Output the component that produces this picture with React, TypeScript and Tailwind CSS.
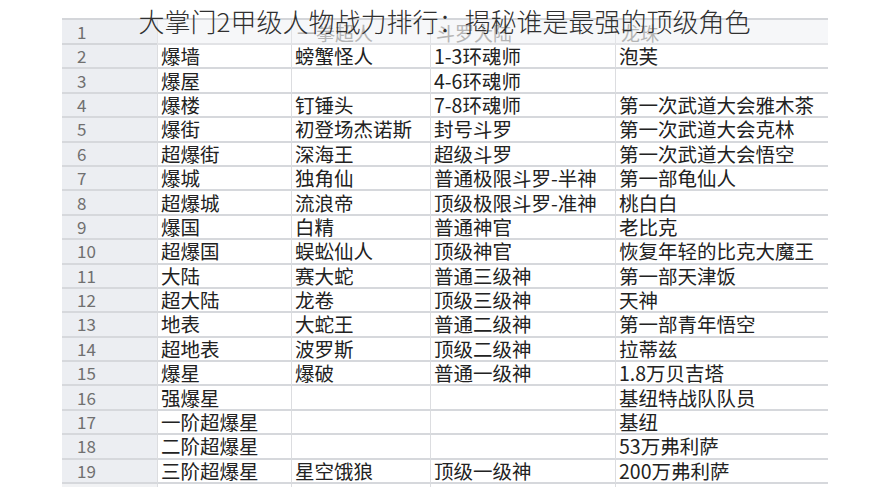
import React from "react";

const ROWS: string[][] = [
  ["爆墙", "螃蟹怪人", "1-3环魂师", "泡芙"],
  ["爆屋", "", "4-6环魂师", ""],
  ["爆楼", "钉锤头", "7-8环魂师", "第一次武道大会雅木茶"],
  ["爆街", "初登场杰诺斯", "封号斗罗", "第一次武道大会克林"],
  ["超爆街", "深海王", "超级斗罗", "第一次武道大会悟空"],
  ["爆城", "独角仙", "普通极限斗罗-半神", "第一部龟仙人"],
  ["超爆城", "流浪帝", "顶级极限斗罗-准神", "桃白白"],
  ["爆国", "白精", "普通神官", "老比克"],
  ["超爆国", "蜈蚣仙人", "顶级神官", "恢复年轻的比克大魔王"],
  ["大陆", "赛大蛇", "普通三级神", "第一部天津饭"],
  ["超大陆", "龙卷", "顶级三级神", "天神"],
  ["地表", "大蛇王", "普通二级神", "第一部青年悟空"],
  ["超地表", "波罗斯", "顶级二级神", "拉蒂兹"],
  ["爆星", "爆破", "普通一级神", "1.8万贝吉塔"],
  ["强爆星", "", "", "基纽特战队队员"],
  ["一阶超爆星", "", "", "基纽"],
  ["二阶超爆星", "", "", "53万弗利萨"],
  ["三阶超爆星", "星空饿狼", "顶级一级神", "200万弗利萨"],
];

const FONT = { fontFamily: '"Noto Sans CJK SC", "Noto Sans", sans-serif' };

export default function App() {
  return (
    <div className="relative w-full h-[500px] bg-white overflow-hidden" style={FONT}>
      <div className="ml-[62px] mt-[18px] w-[766px] border-t-2 border-[#d4d6da]">
        <div className="grid grid-cols-[95px_134px_139px_185px_213px]">
          {/* header row */}
          <div className="h-[25px] bg-[#eceef2] border-b-2 border-[#d4d6da] pl-[15px] flex items-center text-[17px] text-[#707070] leading-[20px]">
            1
          </div>
          <div className="h-[25px] bg-[#f6f7f9] border-b-2 border-[#d4d6da] border-l border-[#e2e3e6]" />
          <div className="h-[25px] bg-[#f6f7f9] border-b-2 border-[#d4d6da] border-l border-[#e2e3e6] pl-[5px] flex items-end text-[19px] text-[#b4b4b4] leading-[20px]">
            一拳超人
          </div>
          <div className="h-[25px] bg-[#f6f7f9] border-b-2 border-[#d4d6da] border-l border-[#e2e3e6] pl-[5px] flex items-end text-[19px] text-[#b4b4b4] leading-[20px]">
            斗罗大陆
          </div>
          <div className="h-[25px] bg-[#f6f7f9] border-b-2 border-[#d4d6da] border-l border-[#e2e3e6] pl-[5px] flex items-end text-[19px] text-[#b4b4b4] leading-[20px]">
            龙珠
          </div>

          {ROWS.map((r, i) => (
            <React.Fragment key={i}>
              <div className="h-[24.4px] bg-[#eceef2] border-b-2 border-[#d6d8dc] pl-[15px] flex items-center text-[17px] text-[#707070] leading-[20px]">
                {i + 2}
              </div>
              {r.map((c, j) => (
                <div
                  key={j}
                  className="h-[24.4px] bg-white border-b-2 border-[#d6d8dc] border-l border-l-[#dcdde0] pl-[3px] flex items-center text-[19.5px] text-[#222] leading-[20px] whitespace-nowrap"
                >
                  {c}
                </div>
              ))}
            </React.Fragment>
          ))}

          {/* cut-off row 20 */}
          <div className="h-[3px] bg-[#f1f2f4]" />
          <div className="h-[3px] border-l border-[#dcdde0]" />
          <div className="h-[3px] border-l border-[#dcdde0]" />
          <div className="h-[3px] border-l border-[#dcdde0]" />
          <div className="h-[3px] border-l border-[#dcdde0]" />
        </div>
      </div>

      <div className="absolute top-[3px] left-0 right-0 flex justify-center">
        <span className="text-[26px] font-light text-[#303030] leading-[36px]">
          大掌门2甲级人物战力排行：揭秘谁是最强的顶级角色
        </span>
      </div>
    </div>
  );
}
